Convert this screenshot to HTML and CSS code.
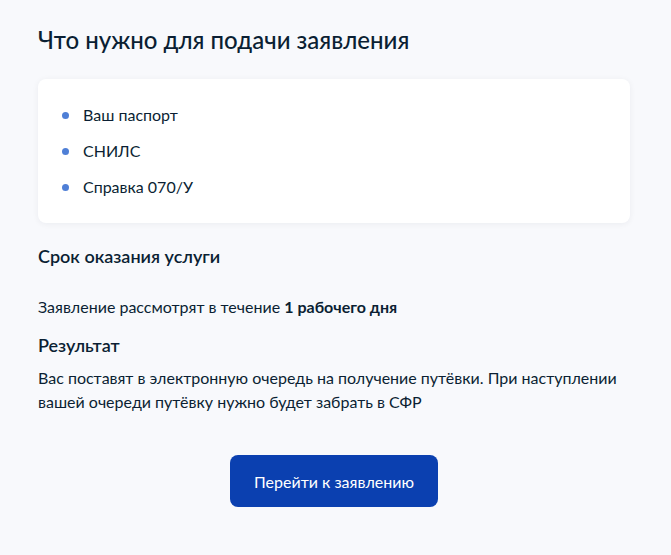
FILE: index.html
```html
<!DOCTYPE html>
<html lang="ru">
<head>
    <meta charset="UTF-8">
    <title>Что нужно для подачи заявления</title>
    <link rel="stylesheet" href="styles.css">
</head>
<body>
    <div class="page">
        <h2 class="title">Что нужно для подачи заявления</h2>
        <div class="card">
            <ul class="docs">
                <li>Ваш паспорт</li>
                <li>СНИЛС</li>
                <li>Справка 070/У</li>
            </ul>
        </div>
        <h3 class="subtitle term">Срок оказания услуги</h3>
        <p class="text">Заявление рассмотрят в течение <b>1 рабочего дня</b></p>
        <h3 class="subtitle result">Результат</h3>
        <p class="text">Вас поставят в электронную очередь на получение путёвки. При наступлении вашей очереди путёвку нужно будет забрать в СФР</p>
        <div class="actions">
            <button class="btn">Перейти к заявлению</button>
        </div>
    </div>
</body>
</html>
```

FILE: styles.css
```css
* {
    margin: 0;
    padding: 0;
    box-sizing: border-box;
}
ul, li {
    list-style: none;
}
body {
    background: #f8f9fc;
    font-family: Lato, "Noto Sans", sans-serif;
    color: #0b1f33;
}
.page {
    padding: 26px 41px 0 38px;
}
.title {
    font-size: 24px;
    font-weight: 500;
    line-height: 28px;
}
.card {
    margin-top: 25px;
    background: #fff;
    border-radius: 8px;
    box-shadow: 0 1px 6px rgba(11, 31, 51, 0.06);
    padding: 24px;
}
.docs li {
    position: relative;
    padding-left: 21px;
    font-size: 16px;
    line-height: 24px;
}
.docs li + li {
    margin-top: 12px;
}
.docs li::before {
    content: "";
    position: absolute;
    left: 0;
    top: 9px;
    width: 7px;
    height: 7px;
    border-radius: 50%;
    background: #4f7fd6;
}
.subtitle {
    font-size: 18px;
    font-weight: 600;
    line-height: 24px;
}
.term {
    margin-top: 21px;
}
.result {
    margin-top: 14px;
}
.text {
    font-size: 16px;
    line-height: 24px;
}
.term + .text {
    margin-top: 27px;
}
.result + .text {
    margin-top: 9px;
}
.text b {
    font-weight: 700;
}
.actions {
    display: flex;
    justify-content: center;
    margin-top: 41px;
}
.btn {
    width: 208px;
    height: 52px;
    border: none;
    border-radius: 8px;
    background: #0b40b0;
    color: #fff;
    font-family: inherit;
    font-size: 16px;
}
```
